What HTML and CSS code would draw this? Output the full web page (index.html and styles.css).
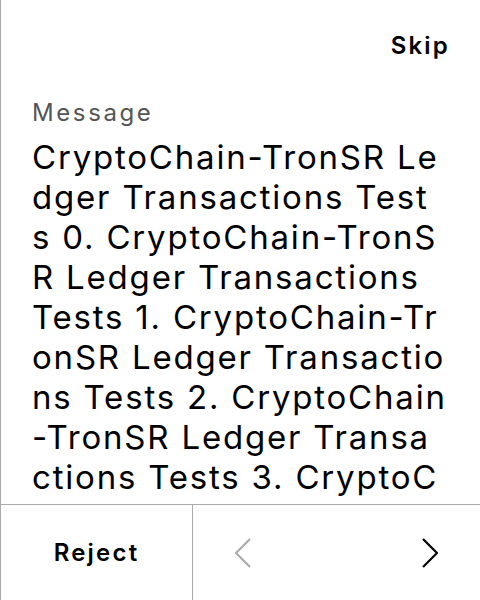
FILE: index.html
```html
<!DOCTYPE html>
<html>
<head>
<meta charset="utf-8">
<link rel="stylesheet" href="styles.css">
</head>
<body>
<div class="screen">
  <div class="header"><span class="skip">Skip</span></div>
  <div class="label">Message</div>
  <div class="message">
    <span class="ln">CryptoChain-TronSR Le</span>
    <span class="ln">dger Transactions Test</span>
    <span class="ln">s 0. CryptoChain-TronS</span>
    <span class="ln">R Ledger Transactions</span>
    <span class="ln">Tests 1. CryptoChain-Tr</span>
    <span class="ln">onSR Ledger Transactio</span>
    <span class="ln">ns Tests 2. CryptoChain</span>
    <span class="ln">-TronSR Ledger Transa</span>
    <span class="ln">ctions Tests 3. CryptoC</span>
    <span class="ln">hain-TronSR Ledger Tra</span>
  </div>
  <div class="footer">
    <div class="reject">Reject</div>
    <div class="nav">
      <svg class="chev" width="16" height="30" viewBox="0 0 16 30"><polyline points="15,1 1,15 15,29" fill="none" stroke="#aaaaaa" stroke-width="2"/></svg>
      <svg class="chev" width="16" height="30" viewBox="0 0 16 30"><polyline points="1,1 15,15 1,29" fill="none" stroke="#000000" stroke-width="2.2"/></svg>
    </div>
  </div>
</div>
</body>
</html>
```

FILE: styles.css
```css
html, body {
  margin: 0;
  padding: 0;
  background: #fff;
}
.screen {
  width: 480px;
  height: 600px;
  box-sizing: border-box;
  border-left: 1px solid #aaaaaa;
  display: flex;
  flex-direction: column;
  font-family: Inter, "Noto Sans", sans-serif;
  color: #000;
  overflow: hidden;
}
.header {
  padding: 30px 32px 0 32px;
  height: 32px;
  text-align: right;
}
.skip {
  font-size: 24px;
  line-height: 32px;
  font-weight: 600;
  letter-spacing: 2.2px;
  margin-right: -2px;
}
.label {
  margin-top: 35px;
  padding: 0 31px;
  font-size: 24px;
  line-height: 32px;
  letter-spacing: 2.6px;
  color: #555555;
}
.message {
  margin-top: 8px;
  padding: 0 20px 0 31px;
  font-size: 33px;
  line-height: 40px;
  letter-spacing: 1.8px;
  flex: 1;
  overflow: hidden;
}
.ln {
  display: block;
  white-space: nowrap;
}
.footer {
  height: 96px;
  flex: none;
  box-sizing: border-box;
  border-top: 1px solid #aaaaaa;
  display: flex;
}
.reject {
  width: 191px;
  border-right: 1px solid #aaaaaa;
  display: flex;
  align-items: center;
  justify-content: center;
  font-size: 24px;
  font-weight: 600;
  letter-spacing: 2.2px;
}
.nav {
  flex: 1;
  display: flex;
  align-items: center;
  justify-content: space-between;
  padding: 0 42px 0 42px;
}
.chev {
  display: block;
}
```
